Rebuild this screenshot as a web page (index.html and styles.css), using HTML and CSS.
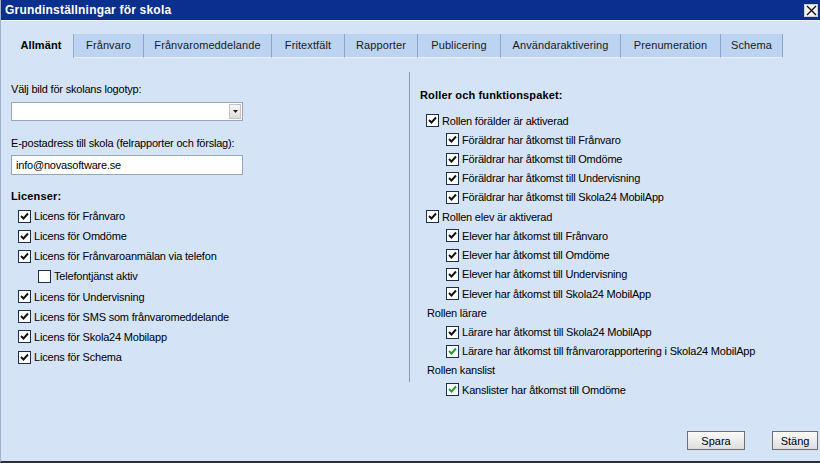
FILE: index.html
```html
<!DOCTYPE html>
<html lang="sv">
<head>
<meta charset="utf-8">
<title>Grundinställningar för skola</title>
<link rel="stylesheet" href="styles.css">
</head>
<body>
<div class="dialog">
  <div class="titlebar">
    <span class="title">Grundinställningar för skola</span>
    <span class="close"><svg width="11" height="11" viewBox="0 0 11 11"><path d="M1 1 L10 10 M10 1 L1 10" stroke="#111" stroke-width="1.4" fill="none"/></svg></span>
  </div>
  <div class="body">
    <div class="tabs">
      <div class="tab active">Allmänt</div>
      <div class="tab">Frånvaro</div>
      <div class="tab">Frånvaromeddelande</div>
      <div class="tab">Fritextfält</div>
      <div class="tab">Rapporter</div>
      <div class="tab">Publicering</div>
      <div class="tab">Användaraktivering</div>
      <div class="tab">Prenumeration</div>
      <div class="tab">Schema</div>
    </div>
    <div class="panel">
      <div class="col left">
        <div class="label">Välj bild för skolans logotyp:</div>
        <div class="select"><span class="arrow"><svg width="5" height="3" viewBox="0 0 5 3"><path d="M0 0 H5 L2.5 3 Z" fill="#222"/></svg></span></div>
        <div class="label l2">E-postadress till skola (felrapporter och förslag):</div>
        <div class="input">info@novasoftware.se</div>
        <div class="heading">Licenser:</div>
        <ul class="list lic">
          <li><span class="cb"><svg viewBox="0 0 11 11"><path d="M2 5 L4.5 7.5 L9 2.5" class="ck"/></svg></span>Licens för Frånvaro</li>
          <li><span class="cb"><svg viewBox="0 0 11 11"><path d="M2 5 L4.5 7.5 L9 2.5" class="ck"/></svg></span>Licens för Omdöme</li>
          <li><span class="cb"><svg viewBox="0 0 11 11"><path d="M2 5 L4.5 7.5 L9 2.5" class="ck"/></svg></span>Licens för Frånvaroanmälan via telefon</li>
          <li class="ind"><span class="cb"></span>Telefontjänst aktiv</li>
          <li><span class="cb"><svg viewBox="0 0 11 11"><path d="M2 5 L4.5 7.5 L9 2.5" class="ck"/></svg></span>Licens för Undervisning</li>
          <li><span class="cb"><svg viewBox="0 0 11 11"><path d="M2 5 L4.5 7.5 L9 2.5" class="ck"/></svg></span>Licens för SMS som frånvaromeddelande</li>
          <li><span class="cb"><svg viewBox="0 0 11 11"><path d="M2 5 L4.5 7.5 L9 2.5" class="ck"/></svg></span>Licens för Skola24 Mobilapp</li>
          <li><span class="cb"><svg viewBox="0 0 11 11"><path d="M2 5 L4.5 7.5 L9 2.5" class="ck"/></svg></span>Licens för Schema</li>
        </ul>
      </div>
      <div class="divider"></div>
      <div class="col right">
        <div class="heading">Roller och funktionspaket:</div>
        <ul class="list roles">
          <li><span class="cb"><svg viewBox="0 0 11 11"><path d="M2 5 L4.5 7.5 L9 2.5" class="ck"/></svg></span>Rollen förälder är aktiverad</li>
          <li class="sub"><span class="cb"><svg viewBox="0 0 11 11"><path d="M2 5 L4.5 7.5 L9 2.5" class="ck"/></svg></span>Föräldrar har åtkomst till Frånvaro</li>
          <li class="sub"><span class="cb"><svg viewBox="0 0 11 11"><path d="M2 5 L4.5 7.5 L9 2.5" class="ck"/></svg></span>Föräldrar har åtkomst till Omdöme</li>
          <li class="sub"><span class="cb"><svg viewBox="0 0 11 11"><path d="M2 5 L4.5 7.5 L9 2.5" class="ck"/></svg></span>Föräldrar har åtkomst till Undervisning</li>
          <li class="sub"><span class="cb"><svg viewBox="0 0 11 11"><path d="M2 5 L4.5 7.5 L9 2.5" class="ck"/></svg></span>Föräldrar har åtkomst till Skola24 MobilApp</li>
          <li><span class="cb"><svg viewBox="0 0 11 11"><path d="M2 5 L4.5 7.5 L9 2.5" class="ck"/></svg></span>Rollen elev är aktiverad</li>
          <li class="sub"><span class="cb"><svg viewBox="0 0 11 11"><path d="M2 5 L4.5 7.5 L9 2.5" class="ck"/></svg></span>Elever har åtkomst till Frånvaro</li>
          <li class="sub"><span class="cb"><svg viewBox="0 0 11 11"><path d="M2 5 L4.5 7.5 L9 2.5" class="ck"/></svg></span>Elever har åtkomst till Omdöme</li>
          <li class="sub"><span class="cb"><svg viewBox="0 0 11 11"><path d="M2 5 L4.5 7.5 L9 2.5" class="ck"/></svg></span>Elever har åtkomst till Undervisning</li>
          <li class="sub"><span class="cb"><svg viewBox="0 0 11 11"><path d="M2 5 L4.5 7.5 L9 2.5" class="ck"/></svg></span>Elever har åtkomst till Skola24 MobilApp</li>
          <li class="plain">Rollen lärare</li>
          <li class="sub"><span class="cb"><svg viewBox="0 0 11 11"><path d="M2 5 L4.5 7.5 L9 2.5" class="ck"/></svg></span>Lärare har åtkomst till Skola24 MobilApp</li>
          <li class="sub"><span class="cb"><svg viewBox="0 0 11 11"><path d="M2 5 L4.5 7.5 L9 2.5" class="ck green"/></svg></span>Lärare har åtkomst till frånvarorapportering i Skola24 MobilApp</li>
          <li class="plain">Rollen kanslist</li>
          <li class="sub"><span class="cb"><svg viewBox="0 0 11 11"><path d="M2 5 L4.5 7.5 L9 2.5" class="ck green"/></svg></span>Kanslister har åtkomst till Omdöme</li>
        </ul>
      </div>
    </div>
    <div class="buttons">
      <button class="btn spara">Spara</button>
      <button class="btn stang">Stäng</button>
    </div>
  </div>
</div>
</body>
</html>
```

FILE: styles.css
```css
* { box-sizing: border-box; }
html, body { margin: 0; padding: 0; }
body {
  width: 820px;
  height: 463px;
  overflow: hidden;
  background: #d5e3f6;
  font-family: "Liberation Sans", Arial, sans-serif;
  font-size: 11px;
  letter-spacing: -0.2px;
  color: #000;
}
.dialog {
  width: 820px;
  height: 463px;
  display: flex;
  flex-direction: column;
  border-left: 1px solid #9fb2cc;
  border-bottom: 2px solid #2b2f38;
  background: #d5e3f6;
}
.titlebar {
  height: 21px;
  background: #0b2f8e;
  display: flex;
  align-items: center;
  justify-content: space-between;
  padding: 0 2px 0 4px;
  border-bottom: 1px solid #eef3fb;
  flex: none;
}
.title {
  color: #fff;
  font-weight: bold;
  font-size: 12px;
  letter-spacing: 0.2px;
}
.close {
  width: 14px;
  height: 13px;
  background: #f2f2f2;
  border: 1px solid #c8d0dc;
  display: flex;
  align-items: center;
  justify-content: center;
  margin-top: 1px;
}
.body {
  flex: 1;
  display: flex;
  flex-direction: column;
  padding: 13px 0 0 8px;
}
.tabs {
  display: flex;
  height: 24px;
}
.tab {
  height: 24px;
  line-height: 23px;
  background: #bcd3f2;
  border-right: 1px solid #8aa6cc;
  border-bottom: 1px solid #e8f0fb;
  font-size: 11px;
  letter-spacing: 0.1px;
  text-align: center;
  color: #1a1a1a;
}
.tab.active {
  background: #d5e3f6;
  font-weight: bold;
  border-bottom: none;
  border-right: 1px solid #9aaac0;
  color: #000;
}
.tab:nth-child(1) { width: 65px; }
.tab:nth-child(2) { width: 70px; }
.tab:nth-child(3) { width: 128px; }
.tab:nth-child(4) { width: 73px; }
.tab:nth-child(5) { width: 73px; }
.tab:nth-child(6) { width: 83px; }
.tab:nth-child(7) { width: 120px; }
.tab:nth-child(8) { width: 100px; }
.tab:nth-child(9) { width: 62px; }

.panel {
  display: flex;
  height: 330px;
  padding-top: 20px;
}
.col.left {
  width: 400px;
  padding-left: 2px;
}
.divider {
  width: 1px;
  background: #8c9cb2;
  margin-top: -6px;
  height: 310px;
}
.col.right {
  padding-left: 10px;
  padding-top: 8px;
}
.label {
  height: 18px;
  line-height: 18px;
  margin-top: 2px;
}
.label.l2 { margin-top: 13px; }
.select {
  width: 232px;
  height: 19px;
  background: #fff;
  border: 1px solid #97a6bb;
  margin-top: 4px;
  display: flex;
  justify-content: flex-end;
  align-items: center;
  padding-right: 1px;
}
.arrow {
  width: 12px;
  height: 15px;
  background: linear-gradient(#fafafa, #dcdcdc);
  border: 1px solid #c4c4c4;
  display: flex;
  align-items: center;
  justify-content: center;
}
.input {
  width: 232px;
  height: 20px;
  background: #fff;
  border: 1px solid #97a6bb;
  margin-top: 3px;
  line-height: 18px;
  padding-left: 4px;
}
.heading {
  font-weight: bold;
  font-size: 11px;
  letter-spacing: 0.15px;
  height: 18px;
  line-height: 18px;
}
.left .heading { margin-top: 12px; }
.list {
  list-style: none;
  margin: 0;
  padding: 0;
}
.list li {
  display: flex;
  align-items: center;
  white-space: nowrap;
}
.lic { padding-left: 7px; margin-top: 1px; }
.lic li { height: 20.15px; }
.lic li.ind { padding-left: 20px; }
.roles { padding-left: 6px; margin-top: 7px; }
.roles li { height: 19.22px; }
.roles li.sub { padding-left: 20px; }
.roles li.plain { padding-left: 1px; }
.cb {
  width: 13px;
  height: 13px;
  border: 1px solid #1c2f4a;
  background: #fff;
  margin-right: 3px;
  display: inline-flex;
  flex: none;
}
.cb svg { width: 11px; height: 11px; }
.ck {
  fill: none;
  stroke: #111;
  stroke-width: 1.9;
}
.ck.green { stroke: #1f9e2a; }
.buttons {
  display: flex;
  justify-content: flex-end;
  gap: 27px;
  padding-right: 2px;
  margin-top: auto;
  margin-bottom: 11px;
}
.btn {
  height: 19px;
  font-family: "Liberation Sans", Arial, sans-serif;
  font-size: 11px;
  background: linear-gradient(#fbfbfb, #dedede);
  border: 1px solid #707070;
  padding: 0;
  color: #000;
}
.btn.spara { width: 58px; }
.btn.stang { width: 46px; }
```
